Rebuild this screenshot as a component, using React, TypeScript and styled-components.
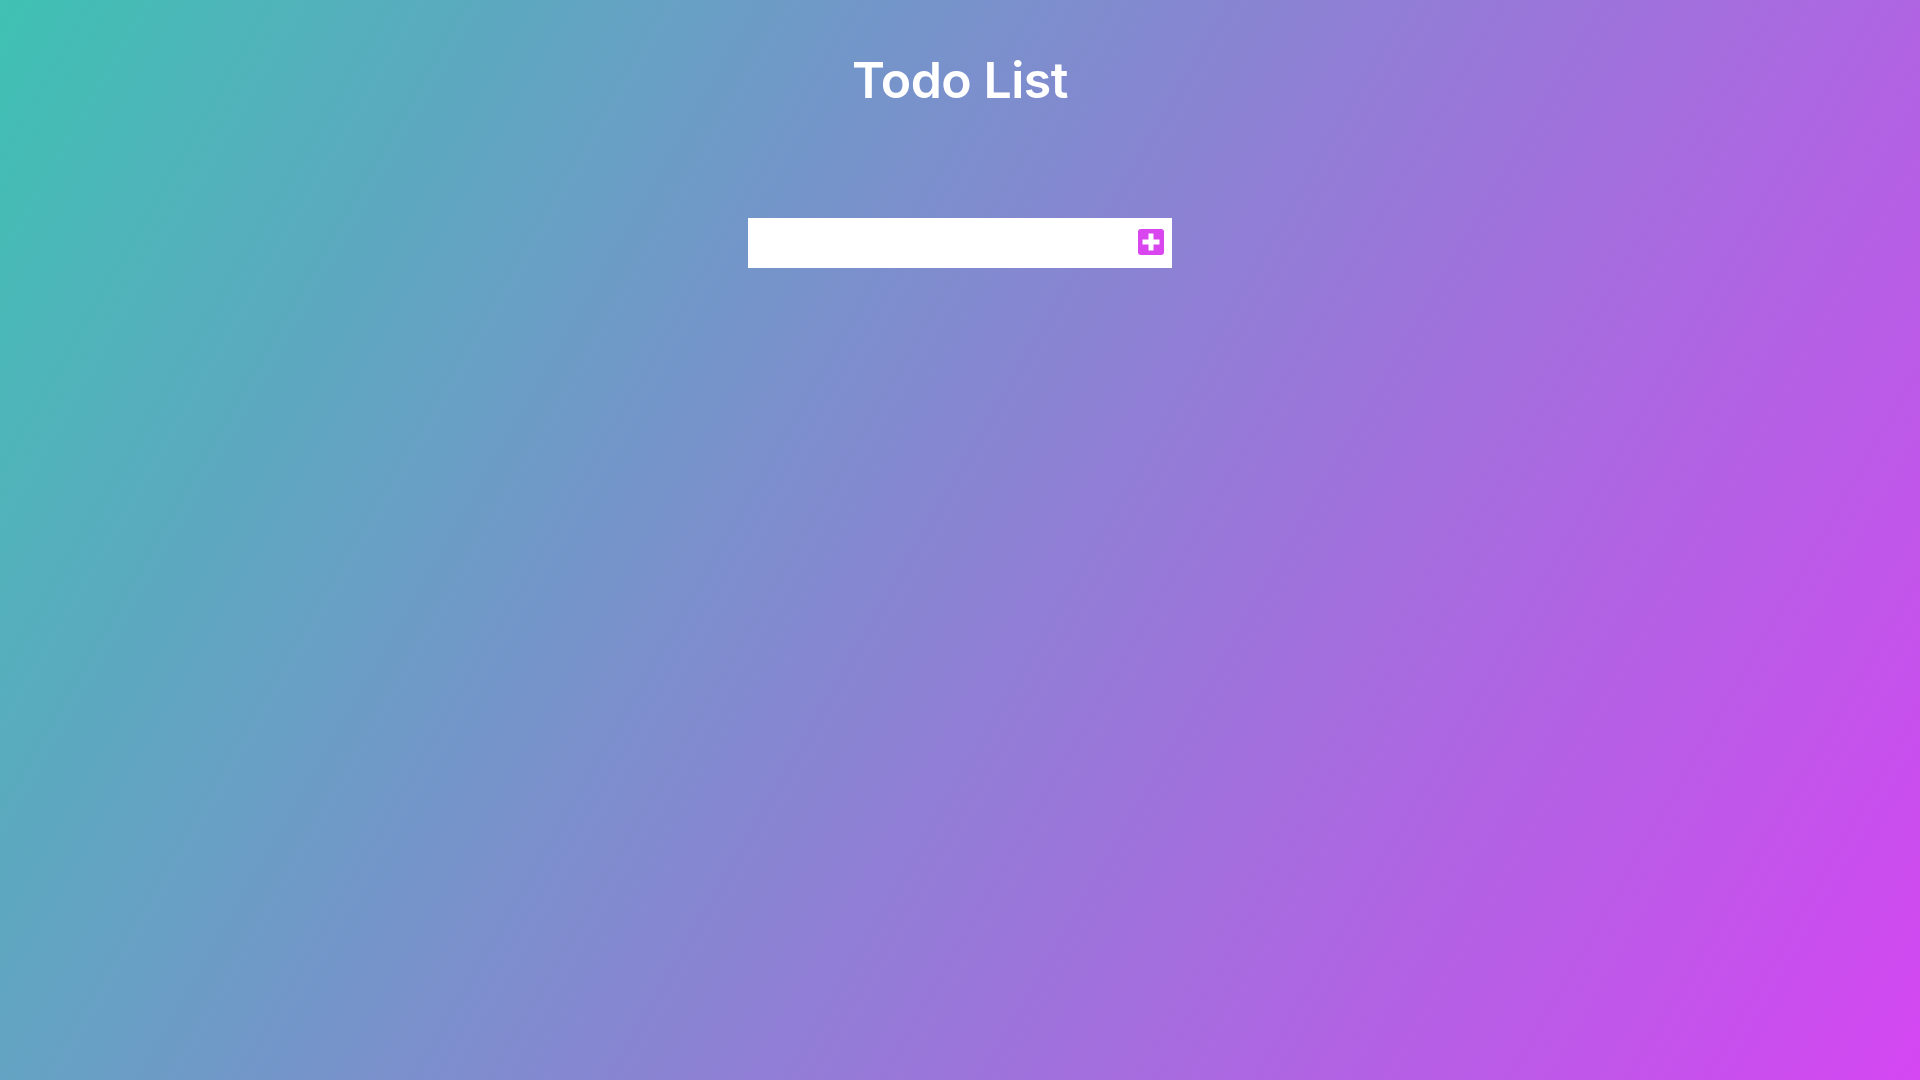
import React from "react";
import styled, { createGlobalStyle } from "styled-components";

const GlobalStyle = createGlobalStyle`
  * { box-sizing: border-box; }
  html, body { margin: 0; padding: 0; }
  body {
    min-height: 100vh;
    font-family: Inter, "Noto Sans", sans-serif;
    background-image: linear-gradient(120deg, #3fc1b3, #d446f2);
    background-attachment: fixed;
    color: #ffffff;
  }
`;

const Page = styled.div`
  min-height: 100vh;
  display: flex;
  flex-direction: column;
  align-items: center;
`;

const Header = styled.header`
  padding-top: 48px;
  display: flex;
  justify-content: center;
`;

const Title = styled.h1`
  margin: 0;
  font-family: Inter, "Noto Sans", sans-serif;
  font-weight: 600;
  font-size: 50px;
  line-height: 64px;
  letter-spacing: -0.5px;
  color: #ffffff;
`;

const Form = styled.form`
  margin-top: 106px;
  display: flex;
  align-items: center;
  width: 424px;
  height: 50px;
  background: #ffffff;
  padding: 0 8px 3px 16px;
`;

const Input = styled.input`
  flex: 1;
  border: none;
  outline: none;
  height: 100%;
  font-size: 18px;
  font-family: Inter, sans-serif;
  background: transparent;
`;

const AddButton = styled.button`
  width: 26px;
  height: 26px;
  padding: 0;
  border: none;
  border-radius: 3px;
  background: #d946ef;
  display: flex;
  align-items: center;
  justify-content: center;
  cursor: pointer;
`;

const PlusIcon = () => (
  <svg width="18" height="18" viewBox="0 0 18 18" aria-hidden="true">
    <rect x="6.5" y="0.5" width="5" height="17" fill="#ffffff" />
    <rect x="0.5" y="6.5" width="17" height="5" fill="#ffffff" />
  </svg>
);

export default function App() {
  return (
    <>
      <GlobalStyle />
      <Page>
        <Header>
          <Title>Todo List</Title>
        </Header>
        <Form onSubmit={(e) => e.preventDefault()}>
          <Input type="text" />
          <AddButton type="submit" aria-label="Add todo">
            <PlusIcon />
          </AddButton>
        </Form>
      </Page>
    </>
  );
}
